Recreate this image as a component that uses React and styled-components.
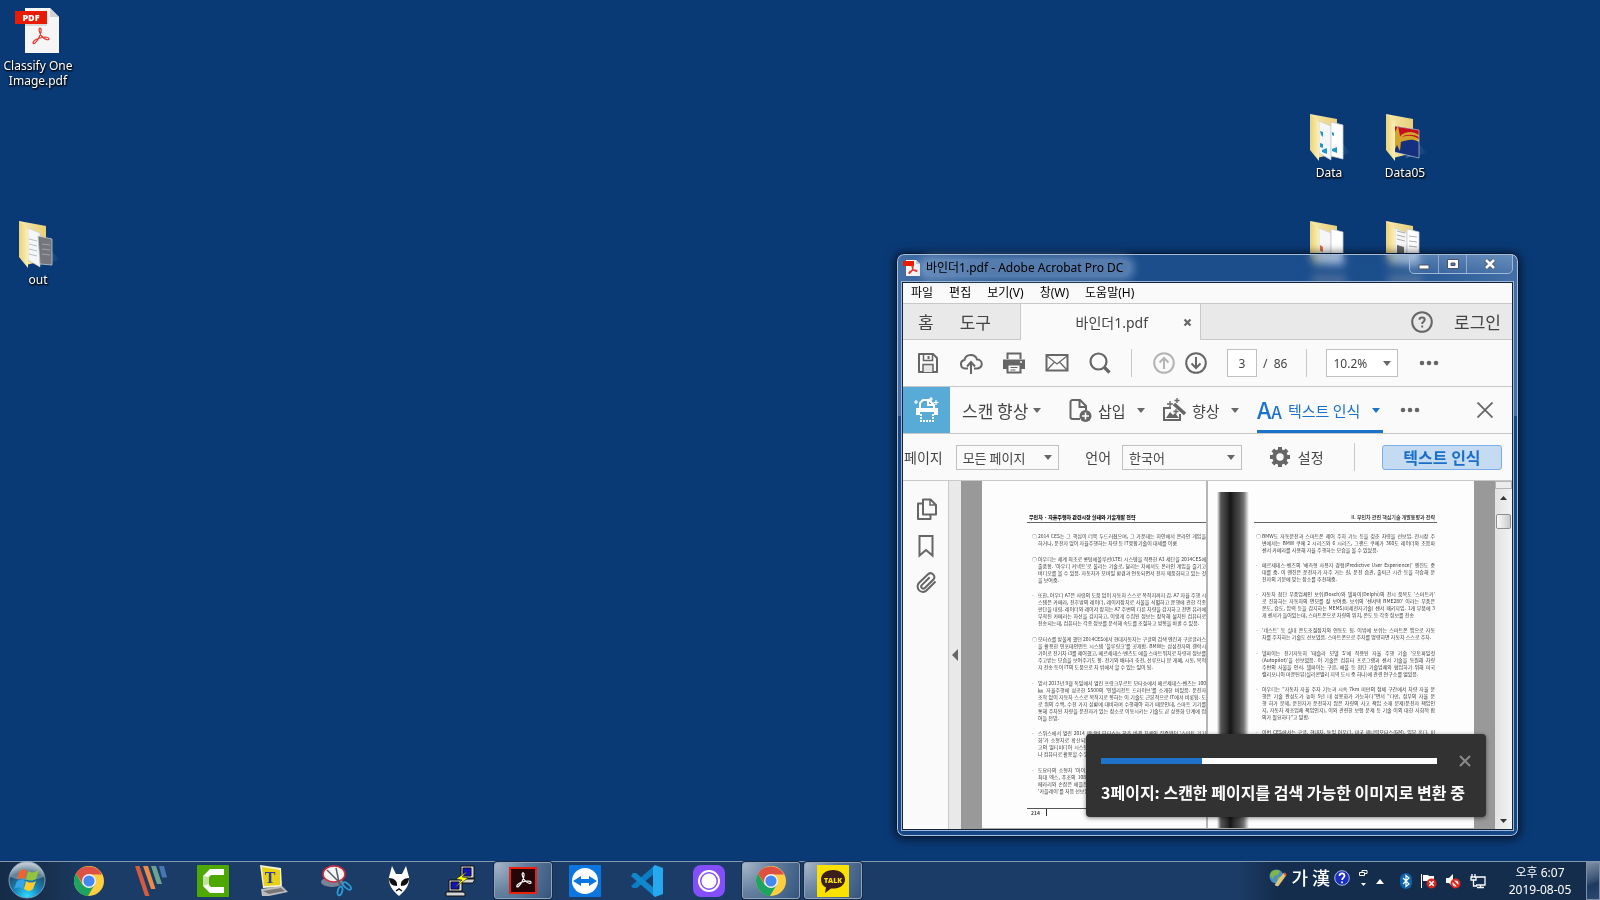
import React from "react";
import styled, { createGlobalStyle, css } from "styled-components";

const GlobalStyle = createGlobalStyle`
  * { box-sizing: border-box; }
  html, body, #root { height: 100%; }
  body {
    margin: 0;
    overflow: hidden;
    font-family: "Noto Sans", "Noto Sans CJK KR", sans-serif;
    font-size: 12px;
  }
  button, input, select { font: inherit; color: inherit; }
  button { border: 0; padding: 0; background: none; }
  svg { display: block; flex: none; }
  h2, p, ul { margin: 0; padding: 0; }
`;

/* ---------- desktop ---------- */
const Screen = styled.div`
  height: 100%;
  min-height: 100vh;
  display: flex;
  flex-direction: column;
  background: #0a3a76;
`;
const Desktop = styled.main`
  position: relative;
  flex: 1;
  overflow: hidden;
`;
const DesktopItem = styled.button`
  position: absolute;
  top: ${(p) => p.$top}px;
  ${(p) => (p.$left !== undefined ? `left: ${p.$left}px;` : `right: ${p.$right}px;`)}
  width: 76px;
  display: flex;
  flex-direction: column;
  align-items: center;
  gap: 5px;
`;
const ItemLabel = styled.span`
  color: #fff;
  font-size: 12px;
  line-height: 15px;
  text-align: center;
  text-shadow: 1px 1px 2px #000, 0 1px 2px #000;
`;
const HiddenLabel = styled.span`
  width: 34px;
  height: 9px;
  margin-top: 3px;
  background: rgba(170, 165, 160, 0.6);
`;

/* ---------- window ---------- */
const Window = styled.section`
  position: absolute;
  top: 253px;
  right: 81px;
  width: 623px;
  padding: 0 5px 6px;
  border: 1px solid #061a38;
  border-radius: 8px;
  background:
    linear-gradient(90deg, rgba(140, 175, 215, 0.4), rgba(90, 130, 180, 0.12) 90px, rgba(60, 110, 170, 0.15) 480px, rgba(140, 175, 215, 0.4)) top / 100% 162px no-repeat,
    rgba(38, 86, 148, 0.4);
  backdrop-filter: blur(4px) brightness(1.08);
  box-shadow: inset 0 0 0 1px #a6bfdc, 0 1px 8px 2px rgba(0, 0, 0, 0.55);
`;
const TitleBar = styled.header`
  height: 28px;
  padding-left: 1px;
  display: flex;
  align-items: flex-start;
`;
const Title = styled.h2`
  display: flex;
  align-items: center;
  gap: 5px;
  height: 28px;
  font-size: 12px;
  font-weight: 400;
  white-space: nowrap;
  color: #000;
`;
const TitleText = styled.span`
  padding: 0 8px 0 4px;
  margin-left: -4px;
  line-height: 18px;
  border-radius: 9px;
  background: rgba(175, 200, 230, 0.38);
  box-shadow: 0 0 7px 4px rgba(175, 200, 230, 0.38);
`;
const CaptionButtons = styled.div`
  margin-left: auto;
  display: flex;
  height: 20px;
  border: 1px solid #a0b9d6;
  border-radius: 0 0 5px 5px;
`;
const CaptionButton = styled.button`
  width: ${(p) => (p.$wide ? 46 : 28)}px;
  display: grid;
  place-items: center;
  background: linear-gradient(rgba(170, 195, 225, 0.35), rgba(110, 145, 190, 0.2));
  & + & { border-left: 1px solid #8fa9c9; }
`;
const Client = styled.div`
  border: 1px solid #14243c;
  outline: 1px solid #9db7d5;
  background: #fafafa;
  color: #444;
`;

/* ---------- bars ---------- */
const Spacer = styled.span`
  width: ${(p) => p.$w}px;
  flex: none;
`;
const Bar = styled.div`
  display: flex;
  align-items: center;
  height: ${(p) => p.$height}px;
  border-bottom: 1px solid #c8c8c8;
`;
const MenuBar = styled(Bar)`
  padding-left: 8px;
  gap: 16px;
  color: #000;
`;
const MenuItem = styled.button`
  font-size: 12px;
  line-height: 18px;
`;
const Tabs = styled.nav`
  display: flex;
  height: 36px;
  font-family: "Noto Sans CJK KR", sans-serif;
  font-size: 17px;
`;
const TabStrip = styled.div`
  display: flex;
  align-items: center;
  background: #e9e9e9;
  border-bottom: 1px solid #c8c8c8;
  ${(p) =>
    p.$grow
      ? css`flex: 1; justify-content: flex-end; gap: 20px; padding-right: 11px; border-left: 1px solid #c8c8c8;`
      : css`width: 118px; gap: 26px; padding-left: 15px; border-right: 1px solid #c8c8c8;`}
`;
const ActiveTab = styled.div`
  width: 179px;
  display: flex;
  align-items: center;
  justify-content: flex-end;
  gap: 35px;
  padding-right: 8px;
  font-family: "Noto Sans", "Noto Sans CJK KR", sans-serif;
  font-size: 14px;
`;
const IconRow = styled.div`
  display: flex;
  align-items: center;
  gap: ${(p) => p.$gap}px;
`;
const IconButton = styled.button`
  display: grid;
  place-items: center;
  width: 24px;
  height: 24px;
`;
const Divider = styled.span`
  width: 1px;
  height: 28px;
  background: #c8c8c8;
`;
const ToolBar = styled(Bar)`
  padding-left: 13px;
  color: #444;
`;
const PageInput = styled.input`
  width: 30px;
  height: 28px;
  padding: 0;
  text-align: center;
  border: 1px solid #c0c0c0;
  background: #fff;
`;
const SelectBox = styled.label`
  position: relative;
  display: flex;
  width: ${(p) => p.$width}px;
  height: ${(p) => p.$height}px;
  svg { position: absolute; right: 7px; top: calc(50% - 2px); pointer-events: none; }
`;
const Select = styled.select`
  appearance: none;
  width: 100%;
  padding: 0 6px;
  border: 1px solid #c0c0c0;
  border-radius: 0;
  background: ${(p) => (p.$white ? "#fff" : "#fafafa")};
  font-family: ${(p) => (p.$white ? "inherit" : '"Noto Sans CJK KR", sans-serif')};
  font-size: ${(p) => (p.$white ? 12 : 13)}px;
`;
const ScanBar = styled(Bar)`
  font-family: "Noto Sans CJK KR", sans-serif;
`;
const ScanBadge = styled.span`
  width: 47px;
  height: 46px;
  display: grid;
  place-items: center;
  background: #58abd6;
`;
const ScanTitle = styled.button`
  display: flex;
  align-items: center;
  gap: 5px;
  width: 106px;
  padding-left: 12px;
  font-size: 17px;
  white-space: nowrap;
`;
const ScanTool = styled.button`
  display: flex;
  align-items: center;
  gap: 6px;
  width: ${(p) => p.$width}px;
  margin-left: ${(p) => p.$before}px;
  height: 46px;
  font-size: 15px;
  white-space: nowrap;
  svg:last-child { margin-left: auto; }
  ${(p) => p.$active && css`padding-right: 3px; color: #1b72cb; border-top: 3px solid transparent; border-bottom: 3px solid #1b72cb;`}
`;
const OptionBar = styled(Bar)`
  font-family: "Noto Sans CJK KR", sans-serif;
  font-size: 14px;
  padding: 0 10px 0 1px;
  justify-content: space-between;
`;
const Field = styled.div`
  display: flex;
  align-items: center;
  gap: ${(p) => p.$gap}px;
  white-space: nowrap;
`;
const SettingsButton = styled.button`
  display: flex;
  align-items: center;
  gap: 7px;
  padding-right: 4px;
`;
const RecognizeButton = styled.button`
  width: 120px;
  height: 25px;
  border: 1px solid #7aaeea;
  border-radius: 3px;
  background: #c5dbf2;
  color: #1b6fc8;
  font-size: 16px;
  font-weight: 700;
  line-height: 22px;
`;

/* ---------- document area ---------- */
const Viewer = styled.div`
  position: relative;
  display: flex;
  height: 348px;
`;
const SidePanel = styled.aside`
  width: 46px;
  padding: 16px 0 0 3px;
  display: flex;
  flex-direction: column;
  align-items: center;
  gap: 13px;
  border-right: 1px solid #c8c8c8;
`;
const CollapseStrip = styled.button`
  width: 12px;
  display: grid;
  place-items: center;
  background: #e9e9e9;
`;
const Canvas = styled.div`
  flex: 1;
  display: flex;
  padding: 0 21px;
  background: #999;
`;
const Page = styled.article`
  position: relative;
  overflow: hidden;
  background: #fdfdfd;
  border-bottom: 1px solid #aaa;
  font-family: "Noto Sans CJK KR", sans-serif;
  font-size: 5px;
  color: #3c3c3c;
  ${(p) =>
    p.$left
      ? css`width: 226px; padding: 32px 0 0 45px; border-right: 2px solid #b5b5b5;`
      : css`flex: 1; display: flex; padding-left: 9px;`}
`;
const Spine = styled.div`
  width: 32px;
  margin-top: 11px;
  background: linear-gradient(90deg, #fdfdfd, #555 12%, #333 30%, #161616 42%, #2c2c2c 52%, #4a4a4a 70%, #777 84%, #fdfdfd);
`;
const RightSheet = styled.div`
  width: 183px;
  margin-left: 5px;
  padding-top: 32px;
`;
const PageHead = styled.p`
  line-height: 8px;
  padding: 0 2px 1px;
  border-bottom: 1px solid #666;
  text-align: ${(p) => (p.$right ? "right" : "left")};
  font-weight: ${(p) => (p.$right ? 500 : 900)};
  color: #222;
`;
const Column = styled.div`
  display: flex;
  flex-direction: column;
  justify-content: space-between;
  height: ${(p) => p.$height}px;
  margin: 9px 0 0 ${(p) => p.$indent}px;
  width: ${(p) => p.$width}px;
`;
const Paragraph = styled.p`
  position: relative;
  line-height: 7px;
  text-align-last: justify;
  &::before {
    content: "${(p) => p.$mark}";
    position: absolute;
    left: -6px;
  }
`;
const Line = styled.span`
  display: block;
  white-space: nowrap;
  &:last-child:not(:first-child) { text-align-last: left; }
`;
const PageFoot = styled.p`
  width: 179px;
  margin-top: 14px;
  padding-left: 4px;
  border-top: 1px solid #555;
  line-height: 8px;
  font-weight: 700;
  span { border-left: 1px solid #333; margin-left: 6px; }
`;
const ScrollBar = styled.div`
  width: 17px;
  display: flex;
  flex-direction: column;
  align-items: center;
  background: linear-gradient(90deg, #e2e2e2, #f3f3f3);
`;
const SplitHandle = styled.span`
  width: 17px;
  height: 8px;
  border: 1px solid #b5b5b5;
  background: #ececec;
`;
const ScrollButton = styled.button`
  width: 17px;
  height: 17px;
  display: grid;
  place-items: center;
`;
const Thumb = styled.span`
  width: 15px;
  height: 15px;
  margin: 8px 0 auto;
  border: 1px solid #8f8f8f;
  border-radius: 2px;
  background: linear-gradient(90deg, #fafafa, #e6e6e6 45%, #c9c9c9);
`;

/* ---------- progress toast ---------- */
const Toast = styled.div`
  position: absolute;
  right: 26px;
  bottom: 12px;
  width: 400px;
  height: 83px;
  padding: 21px 15px 0;
  border-radius: 4px;
  background: #323232;
  box-shadow: 0 1px 4px rgba(0, 0, 0, 0.5);
  color: #fff;
`;
const ToastTop = styled.div`
  display: flex;
  align-items: center;
  justify-content: space-between;
`;
const Track = styled.div`
  width: 336px;
  height: 6px;
  background: #fff;
`;
const Fill = styled.div`
  width: 30%;
  height: 100%;
  background: #1f74ca;
`;
const ToastText = styled.p`
  margin-top: 13px;
  font-family: "Noto Sans CJK KR", sans-serif;
  font-size: 16px;
  line-height: 24px;
  font-weight: 700;
  white-space: nowrap;
`;

/* ---------- task bar ---------- */
const TaskBar = styled.footer`
  position: relative;
  height: 39px;
  display: flex;
  border-top: 1px solid #8496ad;
  background: linear-gradient(90deg, #152c49, #183150 50px, #1b3c66 90px, #1b3c66 1240px, #142d4d 1275px);
`;
const StartButton = styled.button`
  width: 60px;
  height: 36px;
  padding-left: 7px;
  display: flex;
  align-items: center;
`;
const Tasks = styled.nav`
  display: flex;
  gap: 4px;
  flex: 1;
`;
const TaskButton = styled.button`
  width: 58px;
  height: 37px;
  display: grid;
  place-items: center;
  ${(p) =>
    p.$open &&
    css`
      border: 1px solid #92a3b9;
      border-radius: 3px;
      background: radial-gradient(circle at 0 0, #a9b8ca, #65809f 45%, #34547d 100%);
      box-shadow: 0 0 0 1px #152b49;
    `}
`;
const Tray = styled.div`
  display: flex;
  align-items: center;
  color: #fff;
`;
const LanguageBar = styled.div`
  display: flex;
  align-items: center;
  height: 32px;
  align-self: flex-start;
`;
const Ime = styled.span`
  padding: 0 4px 2px;
  font-family: "Noto Sans CJK KR", sans-serif;
  font-size: 18px;
  line-height: 24px;
  font-weight: 500;
  white-space: nowrap;
`;
const TrayIcons = styled.div`
  display: flex;
  align-items: center;
  gap: 8px;
  padding: 0 8px 0 9px;
`;
const Clock = styled.time`
  width: 92px;
  text-align: center;
  font-size: 12px;
  line-height: 17px;
`;
const ShowDesktop = styled.button`
  width: 14px;
  height: 38px;
  border: 1px solid #7e90a8;
  background: linear-gradient(160deg, #7e8ea4, #3d5576 45%, #1d395f 60%, #2c4a72);
`;

/* ---------- drawings ---------- */
const Caret = ({ color = "#666", w = 8 }) => (
  <svg width={w} height="5" viewBox="0 0 8 5"><path d="M0 0h8L4 5z" fill={color} /></svg>
);
const Dots = () => (
  <svg width="20" height="6" viewBox="0 0 20 6" fill="#666"><circle cx="3" cy="3" r="2.3" /><circle cx="10" cy="3" r="2.3" /><circle cx="17" cy="3" r="2.3" /></svg>
);
const Triangle = ({ up }) => (
  <svg width="7" height="4" viewBox="0 0 7 4"><path d={up ? "M0 4h7L3.500 0z" : "M0 0h7L3.500 4z"} fill="#333" /></svg>
);
const acrobat = "M3 17c0-3 6-5 9-5.500s7-.5 7 1.200c0 2-4 1-7-2.200C9 7 8.300 2 10 2s1.500 4-.500 8.500C7.500 15 3.500 19.500 3 17z";

function PdfFile() {
  return (
    <svg width="48" height="48" viewBox="0 0 48 48">
      <path d="M11 3h25l9 9v36H11z" fill="#f6f6f7" />
      <path d="M36 3l9 9h-9z" fill="#cfd3d6" />
      <path d="M1 6h32v13H1z" fill="#e81c06" />
      <path d="M11 19l0 2h22v-2z" fill="#d9d9d9" />
      <text x="17" y="16" textAnchor="middle" fontSize="9" fontWeight="800" fontFamily="Open Sans, sans-serif" fill="#fff">PDF</text>
      <path d={acrobat} transform="translate(16 21)" fill="none" stroke="#e2352c" strokeWidth="1.200" />
    </svg>
  );
}
function Folder({ kind }) {
  return (
    <svg width="48" height="48" viewBox="0 0 48 48" overflow="visible">
      <defs>
        <linearGradient id={"ff" + kind} x1="0" x2="1"><stop offset="0" stopColor="#ead17a" /><stop offset="1" stopColor="#fcf0b4" /></linearGradient>
        <linearGradient id={"fb" + kind} x1="0" x2="1"><stop offset="0" stopColor="#f7ebb0" /><stop offset="1" stopColor="#e8cf78" /></linearGradient>
        <linearGradient id={"fs" + kind} x1="0" x2="1"><stop offset="0" stopColor="#7fa3c8" stopOpacity=".5" /><stop offset="1" stopColor="#7fa3c8" stopOpacity="0" /></linearGradient>
      </defs>
      <path d="M24 46l22-5-8-9z" fill={`url(#fs${kind})`} />
      <path d="M5 2l27 5v34l-20 5z" fill={`url(#fb${kind})`} />
      {kind === "marvel" ? (
        <g>
          <path d="M13 14l25 4v28l-25-6z" fill="#15307c" />
          <path d="M13 14l25 4v10l-25-3z" fill="#c40f1c" />
          <path d="M13 30c9 2 14-6 25 0v-3c-9-6-14-2-25-1z" fill="#d3a42b" />
          <path d="M20 23c6-4 12-4 18 0v2c-6-3-12-3-18 0zM17 14l2 10 8 2-7 3-1 10-3-6-3 6V22z" fill="#d3a42b" />
          <path d="M13 14l25 4v28l-25-6z" fill="none" stroke="#cfd6e4" strokeWidth=".6" />
        </g>
      ) : (
        <g>
          <path d="M14 9l12 5v34l-12-7z" fill="#f5f6f7" stroke="#c3c9cf" strokeWidth=".6" />
          <path d={kind === "out" ? "M24 17l14 3v26l-12-1z" : "M26 10l12 3v34l-12-3z"} fill={kind === "out" ? "#73777b" : "#fff"} stroke="#c3c9cf" strokeWidth=".8" />
          {kind === "data" && <g fill="#2196c9"><path d="M15 19l3 1v5l-2-2zM27 20l2 1v3l-2-1zM15 31l3 1v4l-3-1z" /><path d="M17 38l5-2v6l-5-2zM27 37l5-2v6l-5-2z" /></g>}
          {kind === "out" && <path d="M15 20l8 2M15 25l8 2M15 30l8 2M15 35l8 2M28 25l8 1M28 30l8 1M28 35l8 1" stroke="#aab0b5" strokeWidth=".8" />}
          {kind === "red" && <path d="M15 26l3 2v5l-3-1z" fill="#dd6b41" />}
          {kind === "doc" && <g><path d="M16 26l7 2v8l-7-2z" fill="#666" /><path d="M16 12l8 2M16 16l8 2M16 20l8 2M28 17l8 1M28 22l8 1M28 27l8 1" stroke="#999" strokeWidth=".8" /></g>}
        </g>
      )}
      <path d="M5 2l9 8v39l-9-11z" fill={`url(#ff${kind})`} />
    </svg>
  );
}
const TitleIcon = () => (
  <svg width="18" height="18" viewBox="0 0 18 18">
    <path d="M3 1h10l4 4v12H3z" fill="#f5f5f5" /><path d="M13 1l4 4h-4z" fill="#c6c6c6" />
    <path d="M0 2h11v5H0z" fill="#e81c06" />
    <path d={acrobat} transform="translate(4.500 5.500) scale(.5)" fill="none" stroke="#e2352c" strokeWidth="2.400" />
  </svg>
);
const Stroke = ({ size = 24, color = "#666", width = 2, children, ...rest }) => (
  <svg width={size} height={size} viewBox="0 0 24 24" fill="none" stroke={color} strokeWidth={width} {...rest}>{children}</svg>
);
const Save = () => (
  <Stroke><path d="M3 3h14l4 4v14H3z" strokeLinejoin="round" /><path d="M7.500 3v6.500h9V3" strokeWidth="1.500" /><path d="M12.500 5v3" /><path d="M7 21v-7.500h10V21" fill="#e5e5e5" strokeWidth="1.500" /></Stroke>
);
const Cloud = () => (
  <Stroke><path d="M9 17.500H6a4.300 4.300 0 0 1-.6-8.500A6.600 6.600 0 0 1 18 8.500a4.500 4.500 0 0 1 .5 9H15" /><path d="M12 23V11.500M8 15.500l4-4.500 4 4.500" /></Stroke>
);
const Printer = () => (
  <Stroke><path d="M5.500 8V2.500h13V8" /><path d="M1 8.500h22V18h-4v-4H5v4H1z" fill="#666" stroke="none" /><path d="M5.500 13.500h13v8h-13z" fill="#fafafa" /><path d="M8.500 16.500h7M8.500 19h5" strokeWidth="1" /><path d="M18 11h2" stroke="#fff" strokeWidth="1.500" /></Stroke>
);
const Mail = () => (
  <Stroke><path d="M1.500 4h21v15.500h-21z" strokeWidth="2" /><path d="M2 5l10 8 10-8M2 19l7.500-8M22 19l-7.500-8" strokeWidth="1.200" /></Stroke>
);
const Search = () => (
  <Stroke><circle cx="10.500" cy="10.500" r="8" strokeWidth="2.200" /><path d="M16.500 16.500l5 5" strokeWidth="3.200" /></Stroke>
);
const CircleArrow = ({ down, color }) => (
  <Stroke color={color}><circle cx="12" cy="12" r="9.800" /><path d={down ? "M12 6v11M7.500 12.500L12 17l4.500-4.500" : "M12 18V7M7.500 11.500L12 7l4.500 4.500"} /></Stroke>
);
const Help = () => (
  <Stroke><circle cx="12" cy="12" r="9.800" /><path d="M9.500 9.800c0-3 5.200-3 5.200 0 0 1.900-2.600 2-2.600 4.200" /><path d="M12.200 15.500v2" /></Stroke>
);
const ScanIcon = () => (
  <svg width="26" height="26" viewBox="0 0 26 26">
    <path d="M2 11h22v7h-4v-3H6v3H2z" fill="#fff" />
    <path d="M6 11V6l3-3h6l5 5v3M14 3v5h6" fill="none" stroke="#fff" strokeWidth="2" />
    <path d="M7 17v7h12v-7" fill="none" stroke="#fff" strokeWidth="2" strokeDasharray="2 1" />
    <path d="M2 3v4M0 5h4M17 0v4M15 2h4M22 3v5M19.500 5.500h5" stroke="#fff" strokeWidth="1.200" />
  </svg>
);
const Insert = () => (
  <Stroke><path d="M12 21H4.500A2 2 0 0 1 2.500 19V4a2 2 0 0 1 2-2H12l6 6v4" /><path d="M11.500 2v7H18" /><circle cx="17.500" cy="18" r="6" fill="#666" stroke="none" /><path d="M17.500 14.500v7M14 18h7" stroke="#fff" strokeWidth="1.600" /></Stroke>
);
const Enhance = () => (
  <Stroke><path d="M9 10H2v12h16v-6" /><path d="M4 20l4-6 3 3 2-2 4 5z" fill="#666" stroke="none" /><path d="M12 6l11 10" strokeWidth="3.500" /><path d="M8 3v6M5 6h6M15 0v5M12.500 2.500h5M14 11v5M11.500 13.500h5" strokeWidth="1.300" /></Stroke>
);
const Gear = () => (
  <svg width="22" height="22" viewBox="0 0 22 22" fill="none" stroke="#666">
    <circle cx="11" cy="11" r="5.700" strokeWidth="4" />
    <path d="M11 1v3M11 18v3M1 11h3M18 11h3M3.900 3.900l2.200 2.200M15.900 15.900l2.200 2.200M3.900 18.100l2.200-2.200M15.900 6.100l2.200-2.200" strokeWidth="4" />
  </svg>
);
const Letters = styled.span`
  display: flex;
  align-items: baseline;
  width: 25px;
  font-weight: 500;
  line-height: 24px;
  font-size: 23px;
  small { font-size: 17px; }
`;
const Copies = () => (
  <Stroke><path d="M8 2.500h7.500L21 8v9.500H8z" strokeLinejoin="round" /><path d="M15 2.500V8h6" strokeWidth="1.500" /><path d="M8 6.500H3V22h12.500v-4.500" strokeLinejoin="round" /></Stroke>
);
const Bookmark = () => <Stroke><path d="M4.500 2h13v19.500L11 16l-6.500 5.500z" /></Stroke>;
const Clip = () => (
  <Stroke><path d="M20.500 10.500l-8.800 8.800a5.300 5.300 0 0 1-7.600-7.500l8.900-8.600a3.800 3.800 0 0 1 5.400 5.300l-8.600 8.500a2 2 0 0 1-3-2.900l7.900-7.800" /></Stroke>
);

const Chrome = () => (
  <svg width="30" height="30" viewBox="0 0 30 30">
    <circle cx="15" cy="15" r="15" fill="#ffcd40" />
    <path d="M2 7.500l6.500 11L15 21.500l-1 8.500A15 15 0 0 1 2 7.500z" fill="#1da362" />
    <path d="M14 30l7-12-6 2-5 2z" fill="#1da362" />
    <path d="M2 7.500A15 15 0 0 1 28 8.500H15l-6.500 9z" fill="#dd5144" />
    <circle cx="15" cy="15" r="7" fill="#f1f1f1" /><circle cx="15" cy="15" r="5.600" fill="#4688f1" />
  </svg>
);
const Slashes = () => (
  <svg width="32" height="30" viewBox="0 0 32 30">
    <path d="M0 0h4.500l10 30H10z" fill="#d65a3e" /><path d="M8 0h5l7.500 23H16z" fill="#ee8c45" /><path d="M16 0h5l6 18h-5z" fill="#6aa391" /><path d="M24 0h5l3 11.500h-5z" fill="#4677b2" />
  </svg>
);
const Camtasia = () => (
  <svg width="32" height="32" viewBox="0 0 32 32"><rect width="32" height="32" rx="1" fill="#4ea802" /><path d="M27 4H13L6 11v10l7 7h14v-6H14l-2-2v-8l2-2h13z" fill="#fff" /><path d="M6 11v10l6-2v-7z" fill="#c1df9e" /></svg>
);
const TypeTool = () => (
  <svg width="32" height="32" viewBox="0 0 32 32"><path d="M1 0l21 3 1 19-19 1z" fill="#f5f1d4" /><path d="M3 2l18 3v15L5 21z" fill="#e8d313" /><path d="M2 24l21-3 6 6-19 4-7 0z" fill="#bdbdbd" /><path d="M4 26l18-3 4 3-16 3z" fill="#777" /><text x="11" y="18" textAnchor="middle" fontSize="16" fontWeight="700" fontFamily="Liberation Serif, serif" fill="#2e3aa5">T</text></svg>
);
const Snip = () => (
  <svg width="32" height="32" viewBox="0 0 32 32"><ellipse cx="11" cy="17" rx="11" ry="5" fill="#778396" /><ellipse cx="13" cy="9" rx="11" ry="8" fill="#f6f6f6" stroke="#d8283a" strokeWidth="1.500" /><path d="M6 5l16 16M15 3l4 19" stroke="#555f6a" strokeWidth="1.500" /><g fill="none" stroke="#2d9ad8" strokeWidth="1.800"><ellipse cx="19" cy="26" rx="2.200" ry="4.500" transform="rotate(15 19 26)" /><ellipse cx="26" cy="21" rx="2.200" ry="5" transform="rotate(-50 26 21)" /></g></svg>
);
const Alien = () => (
  <svg width="24" height="32" viewBox="0 0 24 32"><path d="M5 1l4 8h6l4-8 3 11c1 7-3 13-10 19C5 25 1 19 2 12z" fill="#fff" /><path d="M2 13c5 0 9 3 8 8-5 0-8-3-8-8zM22 13c-5 0-9 3-8 8 5 0 8-3 8-8z" fill="#111" /><path d="M9 26l3-2 3 2" fill="none" stroke="#111" strokeWidth="1.500" /></svg>
);
const Putty = () => (
  <svg width="32" height="32" viewBox="0 0 32 32" stroke="#111" strokeWidth="1"><path d="M16 1h13v12H16zM13 14h17l-2 4H13z" fill="#d5d5d5" /><path d="M18 3h8v8h-8z" fill="#1111c9" /><path d="M4 15h13v11H4zM1 27h17l2 1v3H1z" fill="#d5d5d5" /><path d="M6 17h8v7H6z" fill="#1111c9" /><path d="M23 6L11 14l6 1-8 8 14-10-6-1z" fill="#ff1" strokeWidth=".5" /></svg>
);
const Acrobat = () => (
  <svg width="28" height="27" viewBox="0 0 28 27"><path d="M1 1h26v25H1z" fill="#240608" stroke="#e8210d" strokeWidth="2" /><path d={acrobat} transform="translate(5 4) scale(.9)" fill="none" stroke="#fff" strokeWidth="1.300" /></svg>
);
const TeamViewer = () => (
  <svg width="32" height="32" viewBox="0 0 32 32"><rect width="32" height="32" rx="1" fill="#0d75df" /><circle cx="16" cy="16" r="13" fill="#fff" /><path d="M4 16l8-5v3h8v-3l8 5-8 5v-3h-8v3z" fill="#0d75df" /></svg>
);
const Code = () => (
  <svg width="32" height="32" viewBox="0 0 32 32"><path d="M24 0L0 21l2 2 4 0L24 8z" fill="#0a7dc4" /><path d="M24 32L0 11l2-3h3l19 16z" fill="#1187ce" /><path d="M24 0l8 3v26l-8 3-2-2V2z" fill="#27a9f0" /></svg>
);
const PurpleRing = () => (
  <svg width="32" height="32" viewBox="0 0 32 32"><rect width="32" height="32" rx="8" fill="#844ffa" /><circle cx="16" cy="16" r="10" fill="none" stroke="#fff" strokeWidth="2" /><circle cx="16" cy="16" r="7.500" fill="#fff" /></svg>
);
const Kakao = () => (
  <svg width="32" height="32" viewBox="0 0 32 32"><path d="M0 0h32v32H0z" fill="#fae100" /><path d="M16 5C9 5 4 9 4 14.500c0 4 2 6.500 5 8L8 28l6-4.500c8 .5 14-3 14-9C28 9 23 5 16 5z" fill="#3b1d1e" /><text x="16" y="18" textAnchor="middle" fontSize="7" fontWeight="800" fontFamily="Open Sans, sans-serif" fill="#fae100">TALK</text></svg>
);
const Orb = () => (
  <svg width="40" height="38" viewBox="0 0 40 38">
    <defs><radialGradient id="orb" cx=".5" cy=".95" r=".9"><stop offset="0" stopColor="#2fdcff" /><stop offset=".4" stopColor="#1686bd" /><stop offset=".75" stopColor="#24506f" /><stop offset="1" stopColor="#a5b7c4" /></radialGradient></defs>
    <circle cx="20" cy="19" r="18" fill="url(#orb)" stroke="#7d9db5" strokeWidth="1" />
    <path d="M3 16a17 16 0 0 1 34 0c-10 4-24 4-34 0z" fill="#fff" opacity=".28" />
    <path d="M12 11c3-3 6-3 8-1l-2 8c-3-2-6-1-8 1z" fill="#ee6430" /><path d="M21 10c3 2 6 2 11-1l-3 9c-4 2-7 2-10 0z" fill="#92c53d" />
    <path d="M10 20c3-2 6-2 8 0l-2 8c-3-2-5-2-9 0z" fill="#35a5e6" /><path d="M19 20c3 2 7 2 10 0l-3 8c-3 3-6 2-9 0z" fill="#fdcb2f" />
  </svg>
);
const Globe = () => (
  <svg width="18" height="18" viewBox="0 0 18 18"><circle cx="7.500" cy="7.500" r="7" fill="#4d8fc0" /><path d="M2 3c3-3 7-2 9-1l-2 4-4 1-1 3-3-3zM9 8l5-1-2 6-4-1z" fill="#7db64a" /><path d="M6 16L15 4l2 2L9 17z" fill="#f1c24e" stroke="#ddd" strokeWidth=".7" /><path d="M15 4l2 2" stroke="#e14f2b" strokeWidth="2" /></svg>
);
const ImeHelp = () => (
  <svg width="16" height="16" viewBox="0 0 16 16"><circle cx="8" cy="8" r="7.300" fill="#1b2fc0" stroke="#aebcdd" /><path d="M5.500 6c0-3.500 5-3.500 5 0 0 1.500-2.400 1.700-2.400 4M8.100 11.500v1.700" fill="none" stroke="#fff" strokeWidth="1.700" /></svg>
);
const ImeMenu = () => (
  <svg width="9" height="22" viewBox="0 0 9 22" fill="none" stroke="#fff"><path d="M3 2V.500h5v3H6M.500 2.500h5v3h-5z" /><path d="M2 13h5l-2.500 3z" fill="#fff" stroke="none" /></svg>
);
const Up = () => <svg width="8" height="5" viewBox="0 0 8 5"><path d="M0 5h8L4 0z" fill="#fff" /></svg>;
const Bluetooth = () => (
  <svg width="12" height="16" viewBox="0 0 12 16"><rect width="12" height="16" rx="6" fill="#0d62ac" /><path d="M3 5l6 6-3 2.500v-11L9 5l-6 6" fill="none" stroke="#fff" strokeWidth="1.200" /></svg>
);
const Flag = () => (
  <svg width="17" height="16" viewBox="0 0 17 16"><path d="M1.500 1v14" stroke="#fff" /><path d="M3 2h5l1 1h5v6H9L8 8H3z" fill="#fff" /><circle cx="11.500" cy="10.500" r="5" fill="#d8271c" /><path d="M9.300 8.300l4.400 4.400M13.700 8.300l-4.400 4.400" stroke="#fff" strokeWidth="1.600" /></svg>
);
const Speaker = () => (
  <svg width="17" height="16" viewBox="0 0 17 16"><path d="M1 5h3l4-4v13l-4-4H1z" fill="#fff" /><circle cx="10.500" cy="10.500" r="4" fill="#eee" stroke="#e0261b" strokeWidth="2" /><path d="M8 8l5 5" stroke="#e0261b" strokeWidth="2" /></svg>
);
const Network = () => (
  <svg width="16" height="16" viewBox="0 0 16 16" fill="none" stroke="#fff" strokeWidth="1.300"><path d="M6 4h9v8H6M10.500 12v2.500M7 14.500h7M2 1v3M5 1v3M1 4h5v3H1zM3.500 7v6H7" /></svg>
);

/* ---------- data ---------- */
const leftText = [
  ["○", "2014 CES는 그 핵심이 더욱 두드러졌으며, 그 가운데는 차안에서 온라인 게임을", "하거나, 운전자 없이 자율주행하는 차량 등 IT융합기술이 대세를 이룸"],
  ["○", "아우디는 세계 최초로 롱텀에볼루션(LTE) 시스템을 적용한 A3 세단을 2014CES에", "출품함. '아우디 커넥트'로 불리는 기술로, 달리는 차에서도 온라인 게임을 즐기고", "비디오를 볼 수 있음. 자동차가 모바일 환경과 연동되면서 전자 제품화되고 있는 것", "을 보여줌."],
  ["-", "또한, 아우디 A7은 사람의 도움 없이 자동차 스스로 목적지까지 감. A7 자율 주행 시", "스템은 카메라, 전후방의 레이더, 레이저장치로 사물을 식별하고 운행에 관한 각종", "판단을 내림. 레이더와 레이저 장치는 A7 주변의 다른 차량을 감지하고 전면 유리에", "부착된 카메라는 차선을 감지하고, 이렇게 수집된 정보는 장착해 설치된 컴퓨터로", "전송되는데, 컴퓨터는 각종 정보를 분석해 속도를 조절하고 방향을 바꿀 수 있음."],
  ["○", "모터쇼를 방불케 했던 2014CES에서 현대자동차는 구글의 검색 엔진과 구글글라스", "을 활용한 인포테인먼트 시스템 '블루링크'를 공개함. BMW는 삼성전자의 갤럭시", "기어로 전기차 i3를 제어했고, 메르세데스-벤츠도 애플 스마트워치로 차량과 정보를", "주고받는 모습을 보여주기도 함. 전기와 배터리 충전, 선루프나 문 개폐, 시동, 목적", "지 전송 등이 IT의 도움으로 차 밖에서 할 수 있는 일이 됨."],
  ["-", "앞서 2013년 9월 독일에서 열린 프랑크푸르트 모터쇼에서 메르세데스-벤츠는 100", "㎞ 자율주행에 성공한 S500의 '인텔리전트 드라이브'를 소개한 바있음. 운전자", "조작 없이 자동차 스스로 목적지로 향하는 이 기술도 근본적으로 IT에서 비롯됨. 도", "로 위의 수백, 수천 가지 상황에 대비하며 수행해야 하기 때문인데, 스마트 기기를", "통해 주차된 차량을 운전자가 있는 장소로 이동시키는 기술도 곧 상용화 단계에 접", "어들 전망."],
  ["-", "스위스에서 열린 2014 제네바 모터쇼는 한층 바뀐 차체인 집중됐던 '스마트 기기", "화'가 소형차로 확산되는 모습을 보였으며 주요 업체는 차량용 시스템을 선보이", "고의 멀티미디어 시스템을 공개하고 스마트폰을 연결해 지도나 음악을 재생하거", "나 컴퓨터로 활용할 수 있음."],
  ["-", "도요타의 소형차 '아이고'는 스마트폰과 연동되는 기능을 갖춘 모델로 시트로엥", "최대 엑스, 푸조의 108 등과 함께 공개됐으며 화면을 공유하는 기능이 특징이며", "페라리와 손잡은 애플은 차량용 운영체제를 발표하고 이를 탑재한 차량을 통해서", "'카플레이'를 처음 선보임."],
];
const rightText = [
  ["○", "BMW도 자동운전과 스마트폰 제어 주차 기능 등을 갖춘 차량을 선보임. 전시장 주", "변에서는 BMW 쿠페 2 시리즈와 6 시리즈, 그랜드 쿠페가 360도 레이더와 초음파", "센서 카메라를 사용해 자율 주행하는 모습을 볼 수 있었음."],
  ["-", "메르세데스-벤츠의 '예측형 사용자 경험(Predictive User Experience)' 엔진도 중", "대를 줌. 이 엔진은 운전자가 자주 가는 길, 운전 습관, 출퇴근 시간 등을 학습해 운", "전자의 기분에 맞는 장소를 추천해줌."],
  ["-", "자동차 첨단 부품업체인 보쉬(Bosch)와 델파이(Delphi)의 전시 품목도 '스마트카'", "로 진화하는 자동차의 면모를 잘 보여줌. 보쉬의 '센서텍 BME280' 이라는 부품은", "온도, 습도, 압력 등을 감지하는 MEMS(미세전자기술) 센서 패키지임. 1개 부품에 3", "개 센서가 들어있는데, 스마트폰으로 차량의 위치, 온도 등 각종 정보를 전송"],
  ["-", "'네스트' 등 실내 온도조절장치와 연동도 됨. 이밖에 보쉬는 스마트폰 앱으로 자동", "차를 주차하는 기술도 선보였음. 스마트폰으로 주차를 명령하면 자동차 스스로 주차."],
  ["-", "델파이는 전기자동차 '테슬라 모델 S'에 적용된 자율 주행 기술 '오토파일럿", "(Autopilot)'을 선보였음. 이 기술은 컴퓨터 프로그램과 센서 기술을 동원해 차량", "주변의 사물을 인식. 델파이는 구글, 애플 등 첨단 기술업체와 협업하기 위해 미국", "캘리포니아 마운틴뷰(실리콘밸리 지역 도시 중 하나)에 관련 연구소를 열었음."],
  ["-", "아우디는 \"자동차 자율 주차 기능과 시속 7km 미만의 정체 구간에서 차량 자율 운", "행은 기술 완성도가 높아 5년 내 상용화가 가능하다\"면서 \"다만, 정부의 자율 운", "행 허가 문제, 운전자가 운전하지 않은 차량의 사고 책임 소재 문제(운전자 책임인", "지, 자동차 제조업체 책임인지), 이와 관련한 보험 문제 등 기술 이외 대한 사회적 합", "의가 필요하다\"고 말함."],
  ["-", "이번 CES에서는 구글, 현대차, 독일 아우디, 미국 제너럴모터스(GM), 일본 혼다, 미"],
];
const tasks = [
  ["Chrome", Chrome], ["Music", Slashes], ["Camtasia", Camtasia], ["Type tool", TypeTool], ["Snipping Tool", Snip], ["foobar2000", Alien], ["PuTTY", Putty],
  ["Adobe Acrobat", Acrobat, true], ["TeamViewer", TeamViewer], ["Visual Studio Code", Code], ["Recorder", PurpleRing], ["Chrome window", Chrome, true], ["KakaoTalk", Kakao, true],
];

const BodyText = ({ items, height, indent, width }) => (
  <Column $height={height} $indent={indent} $width={width}>
    {items.map(([mark, ...lines], i) => (
      <Paragraph key={i} $mark={mark}>
        {lines.map((l, j) => <Line key={j}>{l}</Line>)}
      </Paragraph>
    ))}
  </Column>
);

function AcrobatWindow() {
  return (
    <Window>
      <TitleBar>
        <Title><TitleIcon /><TitleText>바인더1.pdf - Adobe Acrobat Pro DC</TitleText></Title>
        <CaptionButtons>
          <CaptionButton aria-label="Minimize"><svg width="12" height="12" viewBox="0 0 12 12"><path d="M1 7h10v4H1z" fill="#fff" stroke="#4a5568" /></svg></CaptionButton>
          <CaptionButton aria-label="Maximize"><svg width="12" height="12" viewBox="0 0 12 12"><path fillRule="evenodd" d="M.500 1.500h11v9H.500zM4 5v2.500h4V5z" fill="#fff" stroke="#4a5568" /></svg></CaptionButton>
          <CaptionButton $wide aria-label="Close"><svg width="12" height="12" viewBox="0 0 12 12"><path d="M2 2l8 8M10 2l-8 8" stroke="#4a5568" strokeWidth="4.500" /><path d="M2 2l8 8M10 2l-8 8" stroke="#fff" strokeWidth="2.600" /></svg></CaptionButton>
        </CaptionButtons>
      </TitleBar>
      <Client>
        <MenuBar as="nav" $height={21}>
          {["파일", "편집", "보기(V)", "창(W)", "도움말(H)"].map((m) => <MenuItem key={m}>{m}</MenuItem>)}
        </MenuBar>
        <Tabs>
          <TabStrip><button>홈</button><button>도구</button></TabStrip>
          <ActiveTab>
            <span>바인더1.pdf</span>
            <button aria-label="Close tab"><svg width="9" height="9" viewBox="0 0 9 9"><path d="M1.500 1.500l6 6M7.500 1.500l-6 6" stroke="#666" strokeWidth="2.200" /></svg></button>
          </ActiveTab>
          <TabStrip $grow><button aria-label="Help"><Help /></button><button>로그인</button></TabStrip>
        </Tabs>
        <ToolBar $height={47}>
          <IconRow $gap={19}>
            <IconButton aria-label="Save"><Save /></IconButton>
            <IconButton aria-label="Upload"><Cloud /></IconButton>
            <IconButton aria-label="Print"><Printer /></IconButton>
            <IconButton aria-label="Mail"><Mail /></IconButton>
            <IconButton aria-label="Search"><Search /></IconButton>
            <Divider />
          </IconRow>
          <Spacer $w={20} />
          <IconRow $gap={8}>
            <IconButton aria-label="Previous page"><CircleArrow color="#b4b4b4" /></IconButton>
            <IconButton aria-label="Next page"><CircleArrow down /></IconButton>
          </IconRow>
          <Spacer $w={19} />
          <IconRow $gap={6}>
            <PageInput aria-label="Page" defaultValue="3" />
            <span>/&nbsp; 86</span>
          </IconRow>
          <Spacer $w={19} />
          <Divider />
          <Spacer $w={19} />
          <SelectBox $width={72} $height={28}>
            <Select $white aria-label="Zoom"><option>10.2%</option></Select><Caret />
          </SelectBox>
          <Spacer $w={21} />
          <button aria-label="More tools"><Dots /></button>
        </ToolBar>
        <ScanBar $height={47}>
          <ScanBadge><ScanIcon /></ScanBadge>
          <ScanTitle>스캔 향상<Caret /></ScanTitle>
          <ScanTool $width={77} $before={12}><Insert /><span>삽입</span><Caret /></ScanTool>
          <ScanTool $width={77} $before={17}><Enhance /><span>향상</span><Caret /></ScanTool>
          <ScanTool $width={126} $before={18} $active><Letters aria-hidden="true">A<small>A</small></Letters><span>텍스트 인식</span><Caret color="#1b72cb" /></ScanTool>
          <Spacer $w={17} />
          <button aria-label="More"><Dots /></button>
          <Spacer $w={57} />
          <button aria-label="Close toolbar"><svg width="16" height="16" viewBox="0 0 16 16"><path d="M.500.500l15 15M15.500.500l-15 15" stroke="#666" strokeWidth="1.800" /></svg></button>
        </ScanBar>
        <OptionBar $height={47}>
          <Field $gap={13}>
            <label htmlFor="pages">페이지</label>
            <SelectBox $width={103} $height={25}><Select id="pages"><option>모든 페이지</option></Select><Caret /></SelectBox>
          </Field>
          <Field $gap={11}>
            <label htmlFor="language">언어</label>
            <SelectBox $width={120} $height={25}><Select id="language"><option>한국어</option></Select><Caret /></SelectBox>
          </Field>
          <SettingsButton><Gear />설정</SettingsButton>
          <Divider />
          <RecognizeButton>텍스트 인식</RecognizeButton>
        </OptionBar>
        <Viewer>
          <SidePanel><IconButton aria-label="Pages"><Copies /></IconButton><IconButton aria-label="Bookmarks"><Bookmark /></IconButton><IconButton aria-label="Attachments"><Clip /></IconButton></SidePanel>
          <CollapseStrip aria-label="Collapse panel"><svg width="6" height="12" viewBox="0 0 6 12"><path d="M6 0v12L0 6z" fill="#666" /></svg></CollapseStrip>
          <Canvas>
            <Page $left>
              <PageHead>무인차 · 자율주행차 관련시장 실태와 기술개발 전략</PageHead>
              <BodyText items={leftText} height={262} indent={11} width={168} />
              <PageFoot>214<span>&nbsp;</span></PageFoot>
            </Page>
            <Page>
              <Spine />
              <RightSheet>
                <PageHead $right>II. 무인차 관련 핵심기술 개발동향과 전략</PageHead>
                <BodyText items={rightText} height={203} indent={8} width={173} />
              </RightSheet>
            </Page>
          </Canvas>
          <ScrollBar>
            <SplitHandle />
            <ScrollButton aria-label="Scroll up"><Triangle up /></ScrollButton>
            <Thumb />
            <ScrollButton aria-label="Scroll down"><Triangle /></ScrollButton>
          </ScrollBar>
          <Toast role="status">
            <ToastTop>
              <Track><Fill /></Track>
              <button aria-label="Cancel"><svg width="12" height="12" viewBox="0 0 12 12"><path d="M1 1l10 10M11 1L1 11" stroke="#8a8a8a" strokeWidth="2" /></svg></button>
            </ToastTop>
            <ToastText>3페이지: 스캔한 페이지를 검색 가능한 이미지로 변환 중</ToastText>
          </Toast>
        </Viewer>
      </Client>
    </Window>
  );
}

export default function App() {
  return (
    <Screen>
      <GlobalStyle />
      <Desktop>
        <DesktopItem $top={5} $left={0}><PdfFile /><ItemLabel>Classify One Image.pdf</ItemLabel></DesktopItem>
        <DesktopItem $top={219} $left={0}><Folder kind="out" /><ItemLabel>out</ItemLabel></DesktopItem>
        <DesktopItem $top={112} $right={233}><Folder kind="data" /><ItemLabel>Data</ItemLabel></DesktopItem>
        <DesktopItem $top={112} $right={157}><Folder kind="marvel" /><ItemLabel>Data05</ItemLabel></DesktopItem>
        <DesktopItem $top={219} $right={233} aria-label="Folder"><Folder kind="red" /><HiddenLabel /></DesktopItem>
        <DesktopItem $top={219} $right={157} aria-label="Folder"><Folder kind="doc" /><HiddenLabel /></DesktopItem>
        <AcrobatWindow />
      </Desktop>
      <TaskBar>
        <StartButton aria-label="Start"><Orb /></StartButton>
        <Tasks>
          {tasks.map(([name, Icon, open]) => <TaskButton key={name} aria-label={name} $open={open}><Icon /></TaskButton>)}
        </Tasks>
        <Tray>
          <LanguageBar><Globe /><Ime>가 漢</Ime><ImeHelp /></LanguageBar>
          <TrayIcons><ImeMenu /><Up /><Spacer $w={0} /><Bluetooth /><Flag /><Speaker /><Network /></TrayIcons>
          <Clock>오후 6:07<br />2019-08-05</Clock>
          <ShowDesktop aria-label="Show desktop" />
        </Tray>
      </TaskBar>
    </Screen>
  );
}
